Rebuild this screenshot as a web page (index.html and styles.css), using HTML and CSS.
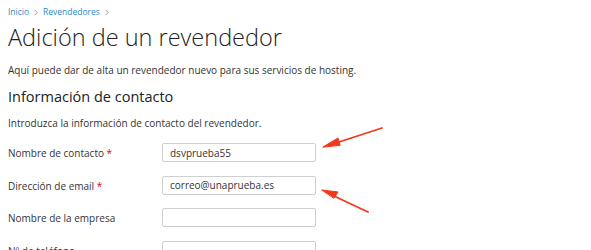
FILE: index.html
```html
<!DOCTYPE html>
<html lang="es">
<head>
<meta charset="utf-8">
<link rel="stylesheet" href="styles.css">
</head>
<body>
<div class="page">
  <nav class="crumbs">
    <a href="#">Inicio</a><svg class="sep" width="4" height="7" viewBox="0 0 4 7"><path d="M0.6 0.8 L3.2 3.5 L0.6 6.2" fill="none" stroke="#9a9a9a" stroke-width="1"/></svg><a href="#">Revendedores</a><svg class="sep" width="4" height="7" viewBox="0 0 4 7"><path d="M0.6 0.8 L3.2 3.5 L0.6 6.2" fill="none" stroke="#9a9a9a" stroke-width="1"/></svg>
  </nav>
  <h1 class="title">Adición de un revendedor</h1>
  <p class="intro">Aquí puede dar de alta un revendedor nuevo para sus servicios de hosting.</p>
  <h2 class="section">Información de contacto</h2>
  <p class="hint">Introduzca la información de contacto del revendedor.</p>
  <div class="form">
    <div class="row"><label class="label">Nombre de contacto <span class="req">*</span></label><input class="field" value="dsvprueba55"></div>
    <div class="row"><label class="label">Dirección de email <span class="req">*</span></label><input class="field" value="correo@unaprueba.es"></div>
    <div class="row"><label class="label">Nombre de la empresa</label><input class="field" value=""></div>
    <div class="row"><label class="label">Nº de teléfono</label><input class="field" value=""></div>
  </div>
</div>
<svg class="arrows" width="591" height="250" viewBox="0 0 591 250">
  <g fill="#f2381c" stroke="#f2381c" stroke-linecap="round">
    <line x1="382" y1="128" x2="336" y2="143" stroke-width="1.8"/>
    <polygon points="323,147 338,138 340,145" stroke-width="1" stroke-linejoin="round"/>
    <line x1="368" y1="212" x2="334" y2="196" stroke-width="1.8"/>
    <polygon points="322,190 338,192 334,198" stroke-width="1" stroke-linejoin="round"/>
  </g>
</svg>
</body>
</html>
```
FILE: styles.css
```css
html, body { margin: 0; padding: 0; background: #fff; }
body { font-family: "Open Sans", "Liberation Sans", sans-serif; color: #333; width: 591px; height: 250px; overflow: hidden; position: relative; }
.page { padding: 6px 8px 0 8px; }
.crumbs { font-size: 8.5px; line-height: 12px; display: flex; align-items: center; }
.crumbs a { color: #2a8ac6; text-decoration: none; }
.crumbs .sep { margin: 0 5px 0 5px; }
.title { font-weight: 300; font-size: 23.5px; line-height: 28px; margin: 5px 0 0 0; color: #222; }
.intro { font-size: 10px; line-height: 14px; margin: 12px 0 0 0; }
.section { font-weight: 400; font-size: 14.5px; line-height: 20px; margin: 10px 0 0 0; color: #222; }
.hint { font-size: 10px; line-height: 14px; margin: 9px 0 0 0; }
.form { margin-top: 13px; display: flex; flex-direction: column; gap: 12.5px; }
.row { display: flex; align-items: flex-start; }
.label { width: 154px; font-size: 10px; line-height: 19px; padding-top: 1px; }
.req { color: #d0021b; }
.field { box-sizing: border-box; width: 154px; height: 19px; border: 1px solid #cfcfcf; border-radius: 2px; padding: 0 7px; font-family: inherit; font-size: 10px; color: #333; margin: 0; }
.arrows { position: absolute; left: 0; top: 0; pointer-events: none; }
```
